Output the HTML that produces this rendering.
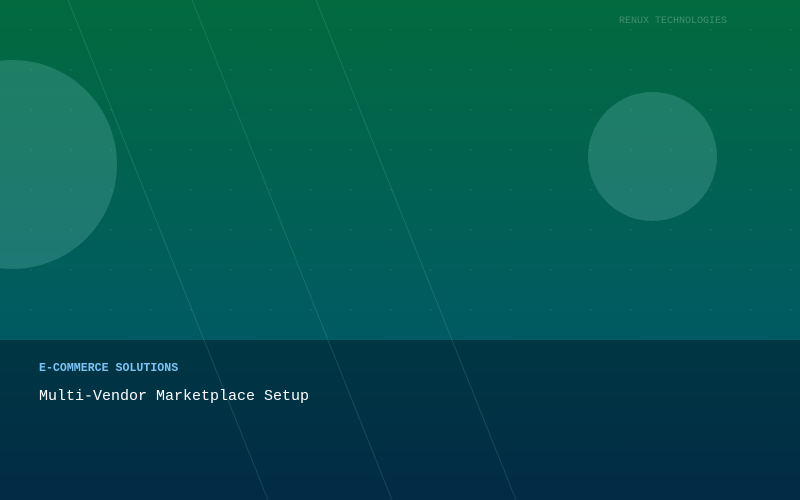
<!DOCTYPE html>
<html><head><meta charset="utf-8"><style>
html,body{margin:0;padding:0;}
body{width:800px;height:500px;position:relative;overflow:hidden;font-family:"Liberation Mono",monospace;}
.top{position:absolute;left:0;top:0;width:800px;height:340px;background:linear-gradient(#026a3e,#005a63);}
.bot{position:absolute;left:0;top:340px;width:800px;height:160px;background:linear-gradient(#003744,#022b45);}
.dots{position:absolute;left:0;top:0;width:800px;height:340px;background-image:radial-gradient(circle,rgba(255,255,255,0.06) 0.8px,transparent 1.2px);background-size:40px 40px;background-position:11px 10px;}
.c{position:absolute;border-radius:50%;background:rgba(120,200,190,0.25);}
svg{position:absolute;left:0;top:0;}
.t{position:absolute;white-space:nowrap;}
</style></head><body>
<div class="top"></div>
<div class="dots"></div>
<div class="c" style="left:-92px;top:60px;width:209px;height:209px;"></div>
<div class="c" style="left:588px;top:92px;width:129px;height:129px;"></div>
<div class="bot"></div>
<svg width="800" height="500"><g stroke="rgba(150,220,210,0.15)" stroke-width="1">
<line x1="68" y1="0" x2="268" y2="500"/><line x1="192" y1="0" x2="392" y2="500"/><line x1="316" y1="0" x2="516" y2="500"/></g></svg>
<div class="t" style="left:619px;top:16px;font-size:10px;color:#3f9070;">RENUX TECHNOLOGIES</div>
<div class="t" style="left:39px;top:362px;font-size:11.6px;font-weight:bold;color:#7cc4f5;">E-COMMERCE SOLUTIONS</div>
<div class="t" style="left:39px;top:388px;font-size:15px;color:#fff;">Multi-Vendor Marketplace Setup</div>
</body></html>
